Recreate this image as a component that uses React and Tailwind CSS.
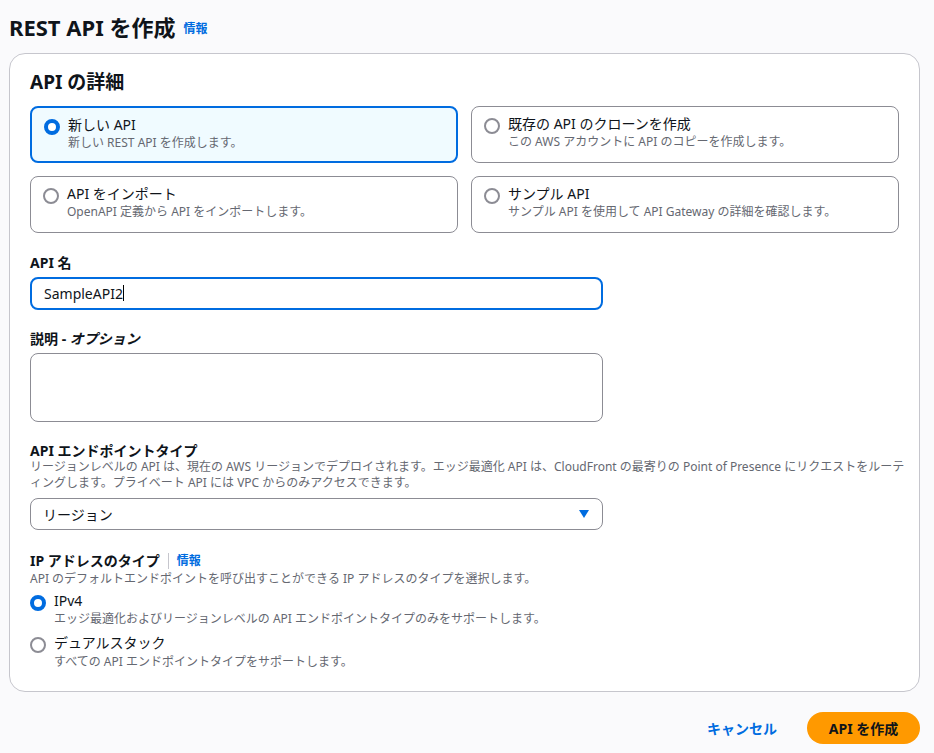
const F = { fontFamily: '"Noto Sans", "Noto Sans CJK JP", sans-serif' };

function Radio({ on }) {
  return on ? (
    <span className="mt-[3px] w-4 h-4 rounded-full border-[4px] border-[#006ce0] bg-white shrink-0" />
  ) : (
    <span className="mt-[3px] w-4 h-4 rounded-full border-2 border-[#8c8c94] bg-white shrink-0" />
  );
}

function Tile({ on, title, desc }) {
  return (
    <div className={"h-[57px] rounded-lg px-[12px] pt-[8px] flex gap-[8px] " + (on ? "border-2 border-[#006ce0] bg-[#f0fbff]" : "border border-[#8c8c94] bg-white")}>
      <Radio on={on} />
      <div className="leading-tight">
        <div className="text-[14px] text-[#0f141a]">{title}</div>
        <div className="text-[12px] text-[#656871] mt-[2px]">{desc}</div>
      </div>
    </div>
  );
}

export default function App() {
  return (
    <div style={F} className="min-h-[753px] w-[934px] bg-[#fafafc] text-[#0f141a] px-[9px]">
      <div className="flex items-end gap-2 pt-[4px] h-[44px]">
        <h1 className="text-[22px] font-bold">REST API を作成</h1>
        <span className="text-[12px] font-bold text-[#006ce0] mb-[6px]">情報</span>
      </div>
      <div className="mt-[9px] w-[911px] h-[639px] bg-white border border-[#c6c6cd] rounded-[16px] px-[20px] pt-[14px]">
        <h2 className="text-[19px] font-bold">API の詳細</h2>
        <div className="grid grid-cols-2 gap-x-[13px] gap-y-[13px] mt-[9px]">
          <Tile on title="新しい API" desc="新しい REST API を作成します。" />
          <Tile title="既存の API のクローンを作成" desc="この AWS アカウントに API のコピーを作成します。" />
          <Tile title="API をインポート" desc="OpenAPI 定義から API をインポートします。" />
          <Tile title="サンプル API" desc="サンプル API を使用して API Gateway の詳細を確認します。" />
        </div>
        <div className="mt-[19px] text-[14px] font-bold">API 名</div>
        <div className="mt-[4px] w-[573px] h-[33px] border-2 border-[#006ce0] rounded-lg px-[12px] flex items-center text-[14px]">SampleAPI2<span className="w-px h-4 bg-black" /></div>
        <div className="mt-[18px] text-[14px] font-bold">説明 - <i>オプション</i></div>
        <div className="mt-[4px] w-[573px] h-[69px] border border-[#8c8c94] rounded-lg" />
        <div className="mt-[20px] text-[14px] font-bold leading-tight">API エンドポイントタイプ</div>
        <div className="text-[12px] text-[#656871] leading-[16px] w-[880px]">リージョンレベルの API は、現在の AWS リージョンでデプロイされます。エッジ最適化 API は、CloudFront の最寄りの Point of Presence にリクエストをルーティングします。プライベート API には VPC からのみアクセスできます。</div>
        <div className="mt-[7px] w-[573px] h-[32px] border border-[#8c8c94] rounded-lg px-[12px] flex items-center justify-between text-[14px]">
          リージョン
          <svg width="12" height="10" viewBox="0 0 12 10"><path d="M1 1h10L6 9z" fill="#006ce0" /></svg>
        </div>
        <div className="mt-[22px] flex items-center text-[14px] font-bold leading-tight">IP アドレスのタイプ<span className="mx-[8px] w-px h-4 bg-[#c6c6cd]" /><span className="text-[12px] text-[#006ce0]">情報</span></div>
        <div className="text-[12px] text-[#656871] leading-[18px]">API のデフォルトエンドポイントを呼び出すことができる IP アドレスのタイプを選択します。</div>
        <div className="mt-[4px] flex gap-[8px]">
          <Radio on />
          <div className="leading-tight"><div className="text-[14px]">IPv4</div><div className="text-[12px] text-[#656871] mt-[2px]">エッジ最適化およびリージョンレベルの API エンドポイントタイプのみをサポートします。</div></div>
        </div>
        <div className="mt-[8px] flex gap-[8px]">
          <Radio />
          <div className="leading-tight"><div className="text-[14px]">デュアルスタック</div><div className="text-[12px] text-[#656871] mt-[2px]">すべての API エンドポイントタイプをサポートします。</div></div>
        </div>
      </div>
      <div className="w-[911px] flex justify-end items-center gap-[30px] mt-[20px]">
        <span className="text-[14px] font-bold text-[#006ce0]">キャンセル</span>
        <button className="h-[32px] w-[113px] rounded-full bg-[#ff9900] text-[14px] font-bold text-[#0f141a]">API を作成</button>
      </div>
    </div>
  );
}
